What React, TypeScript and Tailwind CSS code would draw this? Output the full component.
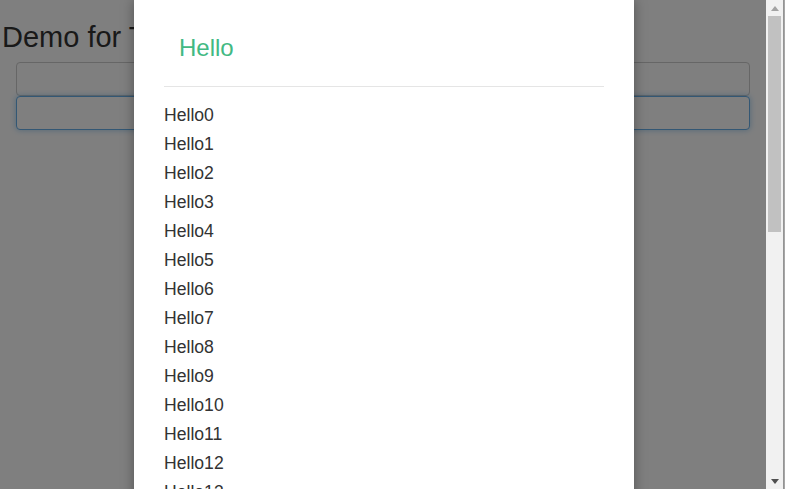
const items = Array.from({ length: 14 }, (_, i) => `Hello${i}`);

export default function App() {
  return (
    <div className="flex h-[489px] w-[785px] overflow-hidden bg-white font-['Liberation_Sans',Arial,sans-serif] text-[#333]">
      {/* page behind the modal */}
      <div className="relative h-full w-[766px] overflow-hidden">
        <div>
          <h1 className="pl-[2px] pt-[22px] text-[29px] leading-[30px]">Demo for Typeahead</h1>
          <div className="flex flex-col pl-4 pt-[10px] pr-4">
            <div className="h-[34px] w-[734px] rounded border border-[#ccc] bg-white" />
            <div className="h-[34px] w-[734px] rounded border border-[#66afe9] bg-white shadow-[0_0_6px_rgba(102,175,233,0.6)]" />
          </div>
        </div>

        {/* backdrop */}
        <div className="absolute inset-0 bg-black/50" />

        {/* modal */}
        <div className="absolute left-[134px] top-0 h-[520px] w-[500px] bg-white shadow-[0_0_12px_rgba(0,0,0,0.35)]">
          <div className="px-[30px]">
            <div className="border-b border-[#e5e5e5] pb-[26px] pl-[15px] pt-[36px]">
              <h3 className="text-[24px] leading-6 text-[#42b983]">Hello</h3>
            </div>
            <ul className="pt-[14px]">
              {items.map((t) => (
                <li key={t} className="text-[17.6px] leading-[29px]">
                  {t}
                </li>
              ))}
            </ul>
          </div>
        </div>
      </div>

      {/* scrollbar */}
      <div className="flex h-full w-[17px] flex-col items-center bg-[#f1f1f1]">
        <div className="flex h-[16px] w-full items-center justify-center">
          <svg width="8" height="5" viewBox="0 0 8 5">
            <path d="M4 0 L8 5 L0 5 Z" fill="#a3a3a3" />
          </svg>
        </div>
        <div className="h-[216px] w-[13px] bg-[#c1c1c1]" />
        <div className="flex-1" />
        <div className="flex h-[16px] w-full items-center justify-center">
          <svg width="8" height="5" viewBox="0 0 8 5">
            <path d="M0 0 L8 0 L4 5 Z" fill="#505050" />
          </svg>
        </div>
      </div>
      <div className="h-full w-[2px] bg-gradient-to-r from-[#8a8a8a] to-[#b0b0b0]" />
    </div>
  );
}
